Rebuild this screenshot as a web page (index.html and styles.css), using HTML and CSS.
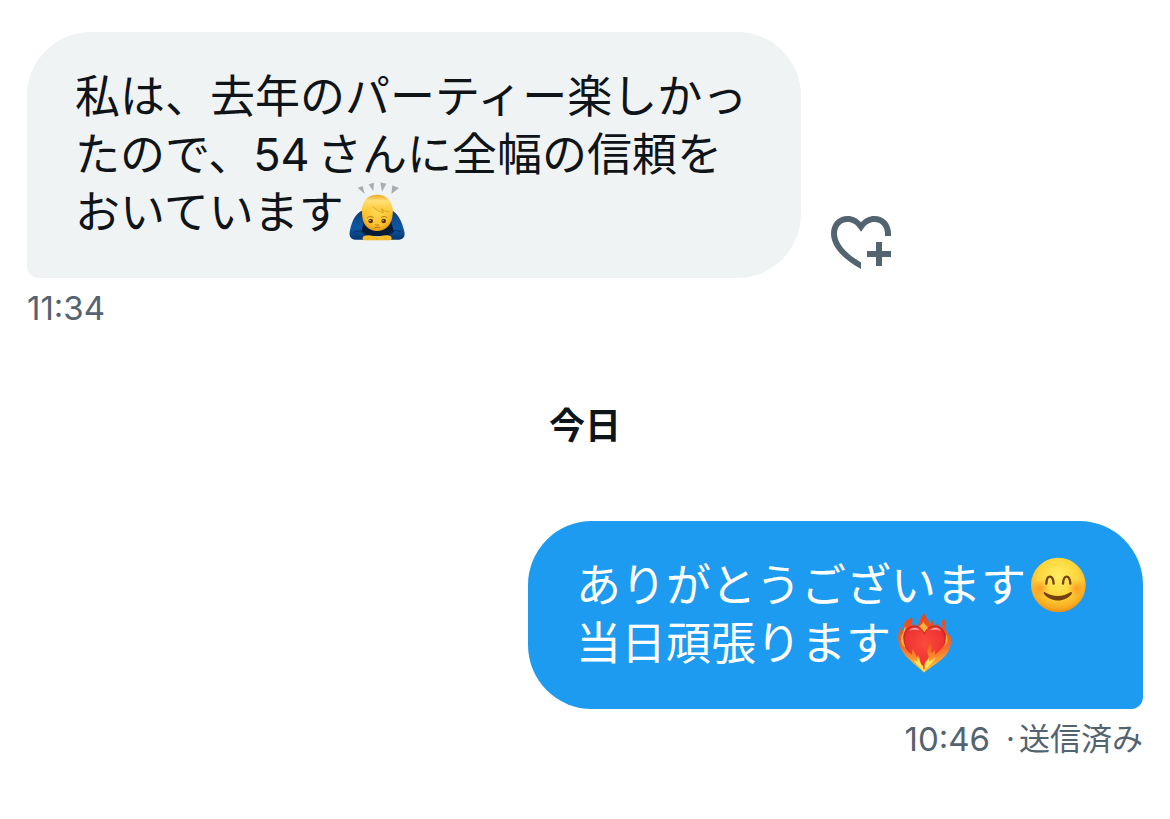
FILE: index.html
```html
<!DOCTYPE html>
<html lang="ja">
<head>
  <meta charset="UTF-8" />
  <meta name="viewport" content="width=device-width, initial-scale=1.0" />
  <title>メッセージ</title>
  <link rel="stylesheet" href="styles.css">
</head>
<body>
  <main class="chat">
    <div class="message received">
      <div class="message-row">
        <p class="bubble">私は、去年のパーティー楽しかったので、54&#8198;さんに全幅の信頼をおいています<svg class="emoji" viewBox="26 27 168 168" role="img" aria-label="お辞儀">
            <defs>
              <radialGradient id="skin" cx="0.5" cy="0.4" r="0.65">
                <stop offset="0" stop-color="#ffdc55" />
                <stop offset="0.7" stop-color="#fbc02c" />
                <stop offset="1" stop-color="#dc8f12" />
              </radialGradient>
              <linearGradient id="hair" x1="0" y1="0" x2="0" y2="1">
                <stop offset="0" stop-color="#eaa81c" />
                <stop offset="0.3" stop-color="#ffe07a" />
                <stop offset="0.7" stop-color="#fdcd42" />
                <stop offset="1" stop-color="#f7bd2c" />
              </linearGradient>
              <linearGradient id="shirt" x1="0" y1="0" x2="0" y2="1">
                <stop offset="0" stop-color="#0d3f7c" />
                <stop offset="0.6" stop-color="#0d57a5" />
                <stop offset="1" stop-color="#07366f" />
              </linearGradient>
            </defs>
            <path fill="#a9adb1" d="M55 38l15-5 6 24zM88 28l16-5-2 26zM123 22l18 4-13 24zM159 31l20 8-23 18z" />
            <path fill="url(#shirt)" d="M72 106C50 112 38 138 32 166c-4 17 1 26 14 28h32l10-12h54l10 12h28c14-2 19-11 14-28-7-28-19-52-38-60z" />
            <path fill="#061b36" d="M74 138h81l9 32-18 14H84l-18-14z" />
            <path fill="none" stroke="#082f62" stroke-width="3" d="M43 172c16-8 26-4 34 7M184 170c-17-7-27-3-36 8" />
            <path fill="#f9bd2b" d="M73 184c10-6 26-3 40 3 15-6 31-9 41-3 6 6 3 12-5 12H78c-8 0-11-6-5-12z" />
            <path fill="none" stroke="#d79a1e" stroke-width="2" d="M84 192l6-4M140 192l-6-4M113 188v7" />
            <path fill="url(#skin)" d="M68 114c0-32 15-53 45-53s47 21 47 53c0 34-20 54-47 54s-45-20-45-54z" />
            <path fill="url(#hair)" d="M69 120c-5-36 11-61 44-61s52 25 46 61c-3-4-7-8-12-10-8 0-14-3-20-8l6 10c-13-2-24-9-31-17-6 10-23 12-33 25z" />
            <path fill="none" stroke="#cf921b" stroke-width="2" stroke-linecap="round" d="M101 95c7 9 18 16 32 18l-7-12c6 6 13 9 21 9" />
            <path fill="none" stroke="#b8781a" stroke-width="3" stroke-linecap="round" d="M84 128c5-5 12-5 18-1M126 127c6-4 12-4 17 1" />
            <circle cx="94" cy="138" r="7" fill="#5a300c" />
            <circle cx="133" cy="138" r="7" fill="#5a300c" />
            <circle cx="92" cy="136" r="2" fill="#fff2b0" />
            <circle cx="131" cy="136" r="2" fill="#fff2b0" />
            <path fill="none" stroke="#b26c0c" stroke-width="3" stroke-linecap="round" d="M109 149c3 3 6 3 9 0M107 158c4-2 10-2 14 0" />
          </svg></p>
        <button class="react" type="button" aria-label="リアクションを追加">
          <svg viewBox="0 0 24 24" aria-hidden="true">
            <path d="M22 10h-2V9.2C20 6.800 18.500 5.300 16.500 5.300c-1.700 0-2.700.800-3.600 2L12 8.600l-.900-1.300c-.900-1.200-1.900-2-3.600-2C5.500 5.300 4 6.800 4 9.200c0 3.300 3 6.700 8 9.600V21C5.800 17.600 2 13.400 2 9.200c0-3.600 2.500-5.900 5.500-5.900 1.800 0 3.400.800 4.500 2.100 1.100-1.300 2.700-2.100 4.500-2.100 3 0 5.500 2.300 5.500 5.900z" />
            <path d="M17 12h2v3h3v2h-3v3h-2v-3h-3v-2h3z" />
          </svg>
        </button>
      </div>
      <div class="meta"><time>11:34</time></div>
    </div>

    <h2 class="day">今日</h2>

    <div class="message sent">
      <div class="message-row">
        <p class="bubble">ありがとうございます<svg class="emoji" viewBox="30 21 168 168" role="img" aria-label="笑顔">
            <defs>
              <radialGradient id="face" cx="0.5" cy="0.35" r="0.66">
                <stop offset="0" stop-color="#ffee62" />
                <stop offset="0.55" stop-color="#fed63b" />
                <stop offset="0.85" stop-color="#f9ad22" />
                <stop offset="1" stop-color="#e88b12" />
              </radialGradient>
              <radialGradient id="blush">
                <stop offset="0" stop-color="#fb7a1c" stop-opacity="0.6" />
                <stop offset="1" stop-color="#fb7a1c" stop-opacity="0" />
              </radialGradient>
            </defs>
            <circle cx="115" cy="105" r="82" fill="url(#face)" />
            <circle cx="61" cy="115" r="27" fill="url(#blush)" />
            <circle cx="169" cy="115" r="27" fill="url(#blush)" />
            <path fill="none" stroke="#75410b" stroke-width="7" stroke-linecap="round" d="M79 101c1-28 20-28 22 0M129 101c2-28 20-28 22 0" />
            <path fill="#75410b" d="M74 126c-3 0-4 3-2 6 20 26 64 26 83 0 2-4 0-7-4-5-22 15-54 15-77-1z" />
          </svg><br>当日頑張ります<svg class="emoji" viewBox="30 30 168 168" role="img" aria-label="燃えるハート">
            <defs>
              <linearGradient id="flame" x1="0" y1="0" x2="0" y2="1">
                <stop offset="0" stop-color="#e9431c" />
                <stop offset="0.55" stop-color="#f26a2a" />
                <stop offset="1" stop-color="#ffc93c" />
              </linearGradient>
              <radialGradient id="heart" cx="0.5" cy="0.4" r="0.65">
                <stop offset="0" stop-color="#fb4a3e" />
                <stop offset="0.7" stop-color="#ee3331" />
                <stop offset="1" stop-color="#c5161c" />
              </radialGradient>
              <linearGradient id="fire" x1="0" y1="0" x2="0" y2="1">
                <stop offset="0" stop-color="#ee4a25" />
                <stop offset="0.5" stop-color="#fb8a2a" />
                <stop offset="1" stop-color="#ffd94a" />
              </linearGradient>
              <linearGradient id="shine" x1="0" y1="0" x2="0" y2="1">
                <stop offset="0" stop-color="#fff" stop-opacity="0.7" />
                <stop offset="1" stop-color="#fff" stop-opacity="0" />
              </linearGradient>
            </defs>
            <path fill="url(#flame)" d="M117 202C98 182 52 156 42 116c-5-20-1-35 5-50 2 7 3 11 6 13 4-12 2-26 13-34 8-4 12-4 15-9 3 11 1 18-1 26 5-1 8-3 11-7 2 5 2 8 1 12 8-5 10-12 12-19 2-10 9-15 15-23 2 15 12 17 15 32 5-1 5-9 4-15 8 7 10 14 10 22 6-3 8-7 9-12 4 9 5 16 8 24 6-2 7-10 7-17-4-7-1-13 6-18 1 11 8 21 1 30 8 7 8 14 9 21 3-2 4-5 4-9 8 15 8 30 3 45-9 34-60 57-78 75z" />
            <path fill="#ffb13c" d="M48 96c6-8 8-20 12-32 4 12 0 20 6 28l-8 38c-7-10-11-22-10-34zM96 70c8-5 14-11 20-20 3 10 11 14 15 20l-14 14zM183 88c6 8 5 16 4 24-3 7-6 12-10 15z" />
            <path fill="url(#heart)" stroke="#a91519" stroke-width="2" d="M118 86c6-16 18-23 32-23 18 0 31 15 31 35 0 36-34 64-63 97-29-33-62-60-62-97 0-20 13-35 31-35 14 0 25 7 31 23z" />
            <path fill="url(#shine)" d="M70 78c6-8 14-10 22-9 6 1 11 4 12 8-10-3-22-3-34 1zM134 77c7-8 18-11 28-6 4 2 7 5 8 9-10-5-23-6-36-3z" />
            <path fill="url(#fire)" d="M117 202c-14-16-36-28-51-54-6-9-10-18-13-28 8 12 17 20 29 30-2-7-1-13 2-18 3 9 9 14 10 23 3-1 4-3 5-5 6 7 6 15 8 24 3 6 5 10 8 10 3-4 3-10 8-16 4-4 8-8 8-14-7-14-4-28 6-46 2 10 4 22 1 34 5 1 9-3 11-8 2 7 2 12 0 16 14-10 26-24 33-42-2 18-8 32-19 43-14 14-34 34-46 51z" />
            <path fill="#ffe45a" d="M117 199c-10-12-24-20-33-36 7 5 11 6 15 8-3-5-3-10-2-14 6 7 7 14 12 22 4 5 8 5 12-3 3-6 8-9 10-17 2 5 2 8 1 11 6-2 13-6 20-14-7 18-25 28-35 43z" />
            <path fill="#e8402b" d="M117 195c-3-6-4-12 0-20 3 8 3 14 0 20z" />
          </svg></p>
      </div>
      <div class="meta"><time>10:46</time><span class="dot">·</span><span>送信済み</span></div>
    </div>
  </main>
</body>
</html>
```
FILE: styles.css
```css
* {
  box-sizing: border-box;
  margin: 0;
  padding: 0;
}

body {
  font-family: Inter, 'Noto Sans CJK JP', sans-serif;
  background-color: #ffffff;
  color: #0f1419;
}

.chat {
  display: flex;
  flex-direction: column;
  padding: 32px 27px;
}

.message {
  display: flex;
  flex-direction: column;
  align-items: flex-start;
}

.message.sent {
  align-items: flex-end;
}

.message-row {
  display: flex;
  align-items: flex-end;
  gap: 24px;
}

.bubble {
  max-width: 774px;
  padding: 36px 48px;
  border-radius: 64px;
  font-size: 45px;
  line-height: 58px;
}

.received .bubble {
  background-color: #eff3f4;
  border-bottom-left-radius: 12px;
}

.sent .bubble {
  background-color: #1d9bf0;
  border-bottom-right-radius: 12px;
  color: #ffffff;
}

.emoji {
  width: 56px;
  height: 56px;
  margin: 0 9px 0 4px;
  vertical-align: -11px;
  overflow: visible;
}

.react {
  flex: none;
  width: 72px;
  height: 72px;
  border: none;
  background: none;
  cursor: pointer;
}

.react svg {
  display: block;
  width: 100%;
  fill: #536471;
}

.meta {
  display: flex;
  margin-top: 10px;
  font-size: 31px;
  line-height: 40px;
  color: #536471;
}

.meta time {
  font-size: 33px;
}

.dot {
  margin: 0 4px 0 16px;
}

.day {
  margin: 74px 0 71px;
  font-size: 36px;
  font-weight: 700;
  line-height: 48px;
  text-align: center;
}

@media (max-width: 900px) {
  .received .bubble {
    flex: 1;
  }
}
```
